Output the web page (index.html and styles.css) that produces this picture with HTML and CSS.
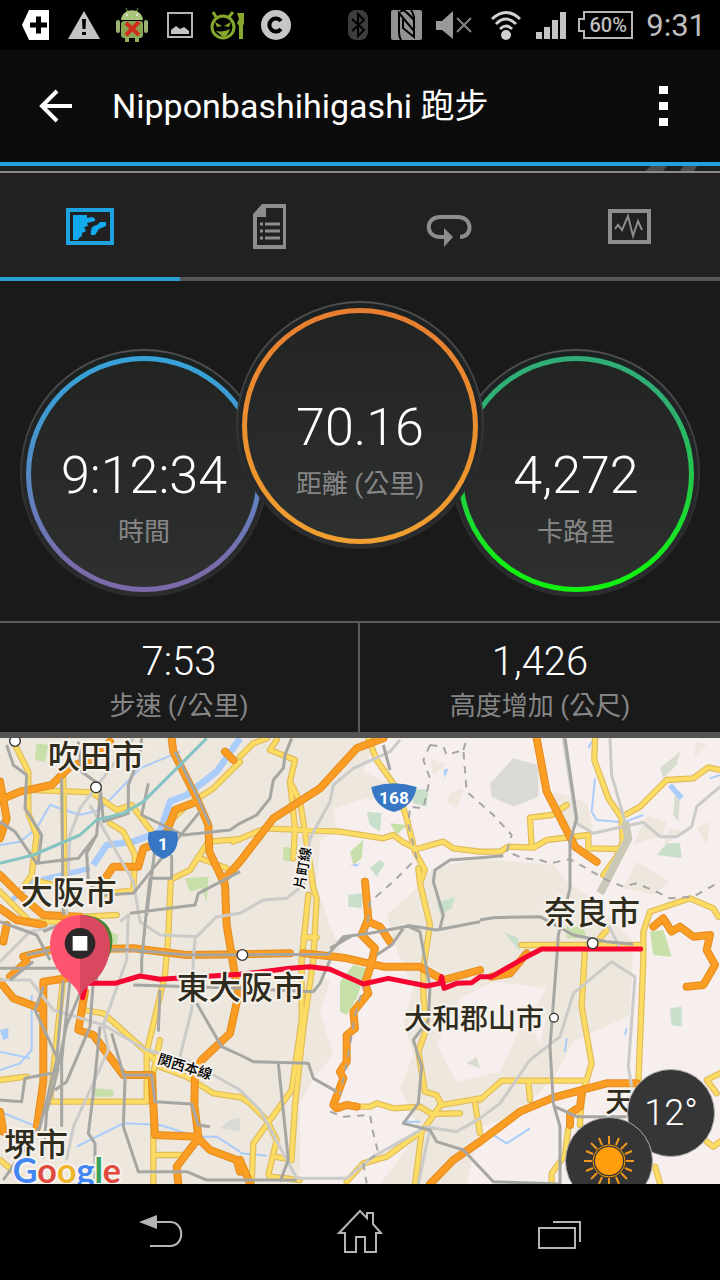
FILE: index.html
```html
<!DOCTYPE html>
<html lang="zh-Hant">
  <head>
    <meta charset="UTF-8" />
    <meta name="viewport" content="width=device-width, initial-scale=1.0" />
    <title>Nipponbashihigashi 跑步</title>
    <link rel="stylesheet" href="styles.css">
  </head>
  <body>
    <!-- Status bar -->
    <div class="status-bar">
      <div class="status-group">
        <svg width="36" height="36" viewBox="0 0 36 36"><path fill="#fff" d="M4 18 11 3h20v30H11z"/><path stroke="#000" stroke-width="5" d="M12 18h17M20.500 9.500v17"/></svg>
        <svg width="36" height="36" viewBox="0 0 36 36"><path fill="#c4c4c4" d="M18 4 34 32H2z"/><path fill="#000" d="M16 12h4l-.5 10h-3zM16 25h4v3h-4z"/></svg>
        <svg width="36" height="36" viewBox="0 0 36 36">
          <path stroke="#7d9a56" stroke-width="1" d="m12 1 2 4m10-4-2 4"/>
          <path fill="#a9c67c" d="M7 13C8 0 28 0 29 13z"/>
          <rect x="7" y="14" width="22" height="17" rx="3" fill="#8aa552"/>
          <rect x="2" y="13" width="4" height="13" rx="2" fill="#9bb474"/><rect x="30" y="13" width="4" height="13" rx="2" fill="#9bb474"/>
          <path fill="#8fae5c" d="M11 30h4v5h-4zM21 30h4v5h-4z"/>
          <circle cx="13" cy="8" r="1" fill="#f2f2f2"/><circle cx="23" cy="8" r="1" fill="#f2f2f2"/>
          <path stroke="#d02c1e" stroke-width="4" d="m12 16 13 12m0-13L12 28"/>
        </svg>
        <svg width="36" height="36" viewBox="0 0 36 36"><rect x="6" y="6" width="24" height="24" fill="none" stroke="#b5b5b5" stroke-width="2"/><path fill="#c4c4c4" d="M9 27v-4l5-4 4 3 4-2 5 4v3z"/></svg>
        <svg width="36" height="36" viewBox="0 0 36 36" fill="none" stroke="#86a82c" stroke-width="3">
          <circle cx="13" cy="20" r="11"/><path d="m3 5 3 5m17-5-4 5"/>
          <path fill="#86a82c" stroke="none" d="M5 15l7 4-5 1zM21 15l-7 4 5 1zM6 24c5 1 10 0 14-2-2 7-6 8-7 8zM27 6h7v10l-1 3v13h-4V19l-2-3 2-4z"/>
        </svg>
        <svg width="36" height="36" viewBox="0 0 36 36"><circle cx="18" cy="18" r="15" fill="#c6c6c6"/><path fill="none" stroke="#000" stroke-width="4" d="M23 14a6.500 6.500 0 1 0 0 8"/></svg>
      </div>
      <div class="status-group">
        <svg width="36" height="36" viewBox="0 0 36 36"><rect x="8" y="3" width="20" height="30" rx="8" fill="#3d3d3d"/><path fill="none" stroke="#000" stroke-width="2" d="m12 12 12 11-6 6V7l6 6-12 11"/></svg>
        <svg width="36" height="36" viewBox="0 0 36 36">
          <rect x="3" y="3" width="31" height="30" rx="2" fill="#929292"/>
          <path fill="none" stroke="#000" stroke-width="2" d="M13 33q-2-3-2-8V6l15 18V13q0-6-3-10"/>
          <path fill="none" stroke="#000" stroke-width="2" d="M12 5 15 3q4 2 11 10M15 12v9l11 9V13M26 30V9"/>
        </svg>
        <svg width="36" height="36" viewBox="0 0 36 36"><path fill="#999" d="M0 14h6l11-10v28L6 23H0z"/><path stroke="#858585" stroke-width="2" d="m21 11 14 14m0-14L21 25"/></svg>
        <svg width="40" height="36" viewBox="0 0 40 36"><circle cx="22" cy="28" r="5" fill="#d0d0d0"/><path fill="none" stroke="#d0d0d0" stroke-width="3" d="M8 12q14-13 28 0M12 17q10-10 20 0M16 22q6-6 12 0"/></svg>
        <svg width="30" height="36" viewBox="0 0 30 36" fill="#c4c4c4"><path d="M0 25h6v7H0zM8 20h6v12H8zM16 13h6v19h-6zM24 5h6v27h-6z"/></svg>
        <span class="battery">
          <svg width="56" height="36" viewBox="0 0 56 36"><path fill="none" stroke="#b8b8b8" stroke-width="2" d="M6 5h48v26H6v-7H1V12h5z"/></svg>
          <span class="battery-text">60%</span>
        </span>
        <span class="clock">9:31</span>
      </div>
    </div>

    <!-- App bar -->
    <header class="app-bar">
      <button type="button" class="icon-button" aria-label="Back">
        <svg width="34" height="34" viewBox="0 0 34 34"><path fill="none" stroke="#fff" stroke-width="4" d="M18 2 3 17l15 15M3 17h30"/></svg>
      </button>
      <h1>Nipponbashihigashi 跑步</h1>
      <button type="button" class="icon-button more" aria-label="More">
        <svg width="10" height="40" viewBox="0 0 10 40"><path fill="#fff" d="M0 0h9v8H0zM0 16h9v8H0zM0 32h9v8H0z"/></svg>
      </button>
    </header>
    <div class="strip">
      <svg width="52" height="5" viewBox="0 0 52 5"><path fill="#4a4d4e" d="M6 0h16l-4 5H0zM38 0h14l-3 5H35z"/></svg>
    </div>

    <!-- Tabs -->
    <nav class="tabs">
      <button type="button" class="tab active" aria-label="Map">
        <svg width="48" height="48" viewBox="0 0 48 48"><path fill="none" stroke="#1fa2e0" stroke-width="4" d="M2 9h44v33H2z"/><path fill="#13a9ef" d="M7 14h14v3l5-1q4 1 3 4l-8 2 1 3-4 1 2 4-4 2v3l-3 2-1 2H7zM25 34q-1-10 6-10l3-3h6v4l-7 3-4 6z"/></svg>
      </button>
      <button type="button" class="tab" aria-label="Details">
        <svg width="48" height="48" viewBox="0 0 48 48"><path fill="#8d8d8d" fill-rule="evenodd" d="M16 3h24v45H7V13zM20 7v9h-9v28h26V7z"/><path stroke="#8d8d8d" stroke-width="3" d="M14 23h3m2 0h15M14 30h3m2 0h15M14 37h3m2 0h15"/></svg>
      </button>
      <button type="button" class="tab" aria-label="Laps">
        <svg width="48" height="48" viewBox="0 0 48 48"><path fill="none" stroke="#8d8d8d" stroke-width="4" d="M19 36h-5C-1 36-1 16 14 16h18c15 0 15 20 2 20"/><path fill="#8d8d8d" d="m18 27 9 9-9 10z"/></svg>
      </button>
      <button type="button" class="tab" aria-label="Charts">
        <svg width="48" height="48" viewBox="0 0 48 48"><path fill="none" stroke="#8d8d8d" stroke-width="4" d="M4 10h39v31H4z"/><path fill="none" stroke="#8d8d8d" stroke-width="2" d="m9 28 3-4 4 5 6-14 5 20 5-15 4 9"/></svg>
      </button>
    </nav>

    <main>
      <!-- Main figures -->
      <section class="dials">
        <div class="dial side">
          <div class="ring time">
            <span class="dial-value">9:12:34</span>
            <span class="label">時間</span>
          </div>
        </div>
        <div class="dial center">
          <div class="ring distance">
            <span class="dial-value">70.16</span>
            <span class="label">距離 (公里)</span>
          </div>
        </div>
        <div class="dial side">
          <div class="ring calories">
            <span class="dial-value">4,272</span>
            <span class="label">卡路里</span>
          </div>
        </div>
      </section>

      <section class="stats">
        <div class="stat">
          <span class="stat-value">7:53</span>
          <span class="label">步速 (/公里)</span>
        </div>
        <div class="stat">
          <span class="stat-value">1,426</span>
          <span class="label">高度增加 (公尺)</span>
        </div>
      </section>

      <!-- Route map -->
      <section class="map">
        <svg class="map-canvas" viewBox="0 9 2160 1338" preserveAspectRatio="xMidYMid slice">
          <defs>
            <path id="yellow-roads" d="M40 20 85 110V235L110 300 95 420 60 470M100 165 275 172 350 225 395 210 455 290M330 265 370 290 405 360 400 465 300 480M190 130 195 540M720 80 640 160 555 215 500 270M512 440 505 600 495 720 440 950V1100M480 915 460 1015V1347M520 430 570 405 625 320 720 312M600 370 680 400M250 545 350 540M0 470 90 560 180 560M120 440 240 470
              M830 15 810 45 885 75 870 140 885 280 880 370M870 140 900 200 915 290 940 460 950 490 940 675 910 880 885 1110 875 1270M720 65 760 25 800 10M700 320 795 280 1020 290 1150 310 1180 300 1210 322 1250 342 1330 320 1360 340 1440 350H1500L1525 335 1600 338 1640 315 1765 300V340L1860 342
              M1105 10 1130 75 1190 160 1220 250 1245 350 1275 405 1260 445 1290 570 1270 700V780L1280 880 1255 950 1275 1070 1310 1080 1325 1110 1440 1090M1260 445 1255 400M925 480 905 675V855L875 1065 760 1225 755 1345M910 607H950M720 1085 750 1105 800 1155 830 1215 805 1320M825 1265 875 1275M810 1325 900 1335M1070 1115H1110L1130 1105 1180 1120 1260 1115 1295 1137 1380 1135M1325 1105 1270 1185 1160 1265 1090 1285 1040 1340M1265 1190 1245 1347M1425 1105 1440 1195
              M1785 10 1783 75 1825 190 1865 250 1868 320 1850 365 1810 420M1875 240 1920 215 2000 135 2080 130 2125 97 2160 105M1700 210 1655 240 1590 248 1595 335M1565 630H1920M1820 585 1800 610M1755 640 1745 815 1775 985 1745 1085 1740 1170M1915 1045 1930 675V590L1950 530 2070 490 2140 520 2155 545M1440 1095 1505 1037H1760M1585 1040 1590 1095M1705 1180 1695 1260 1655 1315V1347M2160 1015 2120 1035 2150 1075M2120 1220 2140 1235 2160 1220M1965 1295 1980 1345
              M0 1035 80 1025M160 1100H440M190 725 150 1100M250 825 310 835 350 870 455 965 480 995 560 1025 640 1075 720 1087M465 1260H545M0 1275 60 1325"/>
            <path id="orange-roads" d="M0 195 60 170 155 150 210 95 270 75 330 20M0 140 20 250 0 310M305 445 340 395H415L430 340 490 320 525 225 590 200M515 10 520 50 590 190 625 270 628 350 675 450 680 570 715 780 690 895 605 975 585 1010 583 1110 595 1205 465 1200 455 1020H370L280 900 235 885 255 770M675 50 700 75M0 420 60 480 130 540 240 545M70 665 150 645 400 640 560 660 870 655M675 430 720 380 820 250 960 160 1070 40 1150 10
              M910 655 1030 668 1150 695 1260 695 1330 735 1440 705M1475 725 1530 715 1580 655M1095 440 1105 550 1085 600 1125 640 1110 700 1095 745 1105 775 1060 830 1065 880 1040 900V980L1020 1010 1030 1030 1000 1110 1010 1120 1040 1110 1070 1115M1105 560 1140 575 1170 620M1610 10 1640 170 1725 335 1790 380M1960 575 1990 550 2015 590 2040 575 2080 605 2130 600 2120 645 2145 690 2110 750 2060 755M1290 1347 1360 1275 1440 1220 1560 1130 1660 1088 1820 1045H1910M1745 1080 1740 1115 1710 1135V1170
              M0 740 40 790 120 820M200 730 130 740V1040L110 1180M595 1210 530 1295 535 1347M595 1210 630 1245 710 1275 720 1310M30 725 80 680M0 1130 10 1190M720 1275 750 1345M0 520 50 555 130 570M10 620 20 570"/>
          </defs>

          <!-- Land, parks and water -->
          <path fill="#ede7dd" d="M0 0H2160V1350H0z"/>
          <path fill="#f6efed" d="M1130 9 1090 110 1180 150 1190 200 1100 190 1000 220 1010 280 960 320 950 450 985 560 1020 640 1000 675 930 800 960 1000 900 1100V1347H2160V9z"/>
          <g fill="#ede7dd">
            <path d="M1300 400 1440 370 1660 390 1700 440 1760 480 1900 620 1890 840 1720 920 1660 1030 1560 1130 1440 1180 1400 1347H1140L1260 1190 1200 1060 1240 960 1210 860 1240 760 1180 620 1160 540 1240 470z"/>
            <path d="M930 700 990 740 960 830 1000 960 930 1040zM1290 70 1340 90 1300 120zM1350 175 1390 160 1370 220 1340 200zM1660 170 1760 200 1780 280 1680 280zM1940 240 2000 260 1990 300 1900 330zM2080 70 2120 30 2090 20zM1990 330 2010 280 2060 290zM2090 280 2130 260 2120 330zM1720 1180 1900 1200 1880 1310 1760 1270zM1910 380 2010 440 1960 480 1870 460z"/>
          </g>
          <path fill="#f6efed" d="M1380 790 1480 740 1640 760 1560 880 1500 1010 1370 1040 1310 930zM1480 1230 1580 1190 1600 1290 1500 1310zM1590 870 1640 840 1620 930z"/>
          <g fill="#c7dfa8">
            <path d="M110 25 145 30 135 80 105 75zM555 430 625 425 620 500 605 460 570 470zM285 1060 340 1065V1085H285zM330 590 355 600 350 630 330 620zM1050 350 1090 315 1085 370 1060 390zM850 335 880 340 875 380 850 375zM1170 265 1220 270 1190 300zM1020 740 1060 690 1100 700 1070 790 1040 840 1020 830zM1950 590 1990 585 2015 665 1960 660zM1700 570 1750 580 1760 610 1700 610z"/>
            <path fill="#c8dfcc" d="M1230 160 1285 165 1280 215 1240 205zM1100 230 1145 235 1140 290 1110 270zM1110 400 1140 375 1155 385 1130 425zM1045 480 1090 475 1085 520 1045 515zM1310 505 1365 485 1355 520 1320 540zM1510 590 1555 610 1560 650zM1970 360 2000 325H2040L2045 370zM2010 820 2045 815V875L2015 870z"/>
            <path fill="#dadad6" d="M1470 145 1540 70 1615 90V185L1540 215 1475 185zM660 1180 690 1155 720 1150V1190z"/>
            <path fill="#d8ddd0" d="M1980 100 2040 50 2030 90 1990 130zM2025 170 2040 180 2035 260 2020 240zM1400 985 1430 965 1440 1000z"/>
          </g>
          <g class="water">
            <path stroke-width="20" d="M720 10 650 110 560 180 510 200 480 290 400 320 320 330 280 390"/>
            <path stroke-width="16" d="M270 400 100 440 30 500M2010 150 2045 190"/>
            <path stroke-width="6" d="M0 330 60 320 110 280 150 210 240 240 300 225 420 100 540 50M95 780V945L60 985 0 1005M0 950 90 970M0 1130 110 1175M230 1235 370 1165 480 1170 590 1205 650 1205 720 1250M1785 130 1775 230 1790 255 1870 262 1930 240M1765 40 1775 20M2130 130 2160 120M1700 910 1695 950M1875 900 1880 880M1480 1200 1520 1225 1590 1180M720 1255 800 1262M1210 1160 1260 1160"/>
            <path fill="#a9ccfb" d="M0 885 25 880V910L10 915zM1330 105 1345 100 1335 130zM1050 390 1080 385 1070 395z"/>
          </g>

          <!-- Roads -->
          <use href="#yellow-roads" class="road yellow-edge"/>
          <use href="#yellow-roads" class="road yellow-fill"/>
          <use href="#orange-roads" class="road orange-edge"/>
          <use href="#orange-roads" class="road orange-fill"/>

          <!-- Railways -->
          <path class="rail-light" d="M400 10 240 220 210 300 200 540M270 210 400 440 420 560 480 600 590 605 650 545 720 535 790 495 860 490 910 450 930 310 990 200 1000 150 1060 100 1170 50 1200 15M585 610 580 675 575 825 540 965M0 735 90 735 160 825 310 870 440 945 560 975 720 1065 780 1125 890 1330H1040L1120 1265 1280 1175 1370 1190 1440 1150 1500 1105 1590 975 1680 905 1720 775 1835 680 1905 725 1885 995 1895 1055M380 675 310 870 325 945 220 1175 200 1275M1690 10 1730 265 1780 295 1930 262 1980 305H2030L2075 275 2090 215 2160 155M1830 10 1835 120 1875 260M1825 570 1860 640M240 560 90 590 0 680M360 560 385 540 380 675M1290 1180 1255 1347"/>
          <path class="rail-wide" d="M1875 260 1885 310 1800 475"/>
          <path class="rail" d="M0 260 45 290 110 385 235 370 290 300 300 180M20 30 40 90 80 120 75 220 125 300 115 380M185 130 190 540M235 20 245 110 300 150 310 260 385 235V150L420 60 425 10M445 145 425 240 550 300 690 285 720 265 770 240 810 190 820 135 850 100 855 60 875 10M525 50 590 180 630 270M290 300 260 355 265 440 300 480 400 475 460 400 600 230M515 360V430H450L440 520 425 675V715M390 535 585 510 595 475 720 410M465 340 440 540M80 660 150 645 400 645 560 660 985 658 1030 605 1110 595 1230 572 1310 585 1440 560
            M990 640 1060 600M1150 30 1170 105M1440 368 1350 375 1305 405 1300 440 1330 540 1320 580M1220 572 1260 590 1275 675 1290 755 1285 855 1240 915 1265 995 1255 1105 1210 1165 1290 1185 1310 1220 1390 1245 1480 1340 1680 1347M1130 660 1175 630 1210 580M1695 10 1730 250 1710 320V460L1675 600 1670 675 1650 935 1660 1105 1680 1175V1347M1440 555 1480 548 1620 545 1720 600 1820 620 1900 628M1440 368 1510 362M1665 1115 1730 1145H1880
            M400 750 720 760 940 770 960 745 990 675M190 735 170 975 120 1175 10 1335M210 735 185 975V1175M175 1000 140 1130 130 1270M240 775 200 870 160 1060M280 735 270 875 200 1040 165 1065M300 875 280 1075 265 1195 285 1225V1347M335 895 375 1035 370 1175 415 1310H560L620 1335H890M370 1020H455L465 1100 575 1107 595 1170 630 1175M590 805 665 935 720 960 760 980 925 985 940 1030 1010 1070M835 985 865 1275 840 1340M480 765 475 890M0 1095 65 1100 75 1030 155 1015M130 755 105 825 170 965M0 700 200 700M30 735 100 680M290 690V740M0 560 110 600 150 675M130 590 200 560"/>
          <path class="rail-dashed" d="M1290 30 1270 75 1290 130 1270 220 1230 215 1225 270 1250 370 1180 440 1110 500 1100 590M1290 30 1330 35 1340 60 1390 45 1400 170 1480 240 1535 300 1520 350 1570 370 1620 375 1650 385 1710 372 1820 435 1870 455 1910 445 1980 475 2010 490 2080 485 2160 440M1390 45 1400 10M990 1130 1030 1145 1110 1140 1120 1195 1135 1255 1090 1285 1100 1345M1095 740 1065 840 1045 960 1020 1080"/>
          <path class="line-teal" d="M0 385 100 360 240 300 290 255 370 235 430 200 500 130 620 10"/>

          <!-- Recorded route -->
          <path class="route" d="M248 788 258 745 345 745 420 723 480 733 720 718 870 700 930 695 990 703 1090 747 1165 730 1280 753 1320 745 1325 725 1332 760 1370 745 1415 743 1440 725H1475L1580 665 1625 642H1922"/>

          <!-- Places -->
          <g class="place-dot">
            <circle cx="45" cy="18" r="16"/><circle cx="288" cy="157" r="16"/><circle cx="727" cy="660" r="16"/><circle cx="1778" cy="625" r="16"/><circle cx="1662" cy="848" r="13"/>
          </g>
          <g fill="#3877c4">
            <path d="M446 292q44-12 86 0 10 60-42 80-56-22-44-80z"/>
            <path d="M1114 156q68-22 136 0-10 60-68 75-60-15-68-75z"/>
          </g>
          <g class="shield-text">
            <text x="489" y="346">1</text>
            <text x="1182" y="206">168</text>
          </g>
          <g class="place">
            <text class="place-large" x="144" y="98">吹田市</text>
            <text class="place-large" x="62" y="508">大阪市</text>
            <text class="place-large" x="1632" y="566">奈良市</text>
            <text class="place-large" x="530" y="792">東大阪市</text>
            <text class="place-large" x="12" y="1262">堺市</text>
            <text class="place-small" x="1212" y="882">大和郡山市</text>
            <text class="place-small" x="1816" y="1131">天</text>
            <text class="line-name" transform="translate(912 464) rotate(-80)">片町線</text>
            <text class="line-name" transform="translate(470 985) rotate(17)">関西本線</text>
          </g>
          <text class="google" x="38" y="1344"><tspan fill="#4285f4">G</tspan><tspan fill="#e0493e">o</tspan><tspan fill="#f0b429">o</tspan><tspan fill="#4285f4">g</tspan><tspan fill="#34a25a">l</tspan><tspan fill="#e0493e">e</tspan></text>

          <!-- Start and finish pin -->
          <path fill="#47862f" d="M250 540c110 5 108 120 38 170z"/>
          <path fill="#ff5470" d="M240 540c-112 4-110 128-44 190 24 20 38 36 44 56z"/>
          <path fill="#d8485f" d="M240 540c110 4 110 128 52 190-22 20-46 36-52 56z"/>
          <circle cx="240" cy="625" r="46" fill="#2b2728"/>
          <path fill="#fff" d="M218 603h44v44h-44z"/>
        </svg>

        <div class="weather temperature">12°</div>
        <div class="weather sky">
          <svg width="52" height="52" viewBox="-26 -26 52 52">
            <circle r="14" fill="#ff9d0a"/><circle r="16" fill="none" stroke="#ff9d0a" stroke-width="1"/>
            <path stroke="#f0981b" stroke-width="2" d="M0-17V-25M0 17V25M-17 0H-25M17 0H25M12-12 18-18M-12-12-18-18M12 12 18 18M-12 12-18 18M7-16 10-23M-7-16-10-23M7 16 10 23M-7 16-10 23M16-7 23-10M16 7 23 10M-16-7-23-10M-16 7-23 10"/>
          </svg>
        </div>
      </section>
    </main>

    <!-- System navigation -->
    <nav class="nav-bar">
      <button type="button" class="icon-button" aria-label="Back">
        <svg width="48" height="48" viewBox="0 0 48 48"><path fill="#b5b5b5" d="M3 14 21 7v14z"/><path fill="none" stroke="#b5b5b5" stroke-width="2" d="M16 14h18c15 0 15 24 0 24H14"/></svg>
      </button>
      <button type="button" class="icon-button" aria-label="Home">
        <svg width="48" height="48" viewBox="0 0 48 48"><path fill="none" stroke="#b5b5b5" stroke-width="2" d="M8 25H3L24 3l7 7V5h6v11l8 9h-5v19H29V29h-9v15H9V24"/></svg>
      </button>
      <button type="button" class="icon-button" aria-label="Recent apps">
        <svg width="48" height="48" viewBox="0 0 48 48"><path fill="none" stroke="#b5b5b5" stroke-width="2" d="M3 20h36v20H3zM17 14h27v20"/></svg>
      </button>
    </nav>
  </body>
</html>
```
FILE: styles.css
```css
* {
  box-sizing: border-box;
}
body {
  display: flex;
  flex-direction: column;
  min-height: 100vh;
  margin: 0;
  background-color: #1a1a1a;
  color: #fff;
  font-family: Roboto, "Noto Sans CJK TC", sans-serif;
}
svg {
  display: block;
}
button {
  padding: 0;
  border: 0;
  background: none;
  color: inherit;
  cursor: pointer;
}

/* Status bar */
.status-bar {
  display: flex;
  justify-content: space-between;
  height: 50px;
  padding: 0 14px 0 18px;
  background-color: #000;
}
.status-group {
  display: flex;
  align-items: center;
  gap: 12px;
}
.battery {
  position: relative;
}
.battery-text {
  position: absolute;
  inset: 0 0 0 4px;
  color: #bdbdbd;
  font-size: 20px;
  font-weight: 500;
  line-height: 36px;
  text-align: center;
}
.clock {
  color: #bdbdbd;
  font-size: 31px;
}

/* App bar */
.app-bar {
  display: flex;
  align-items: center;
  height: 116px;
  padding: 0 51px 0 39px;
  border-bottom: 4px solid #23a2dd;
  background-color: #0c0c0c;
}
.app-bar h1 {
  flex: 1;
  margin: 0 0 0 39px;
  font-size: 34px;
  font-weight: 400;
  line-height: 40px;
}
.strip {
  display: flex;
  justify-content: flex-end;
  height: 7px;
  padding-right: 23px;
  border-bottom: 2px solid #8a8a8c;
  background-color: #1c2224;
}

/* Tabs */
.tabs {
  display: grid;
  grid-template-columns: repeat(4, 1fr);
  background-color: #212121;
}
.tab {
  display: flex;
  align-items: center;
  justify-content: center;
  height: 108px;
  border-bottom: 4px solid #565656;
}
.tab.active {
  border-bottom-color: #2a9fd6;
}

main {
  display: flex;
  flex: 1;
  flex-direction: column;
}

/* Dials */
.dials {
  display: flex;
  justify-content: center;
  padding: 20px 0 24px;
}
.dial {
  width: 248px;
  height: 248px;
  padding: 5px 4px 3px;
  border: 2px solid transparent;
  border-radius: 50%;
  background: linear-gradient(#1b2020, #2b2c2e) padding-box,
    linear-gradient(#505050, #2b2c2e 70%) border-box;
}
.dial.side {
  margin-top: 48px;
}
.dial.center {
  z-index: 1;
  margin: 0 -32px;
}
.ring {
  display: flex;
  flex-direction: column;
  align-items: center;
  height: 100%;
  padding-top: 83px;
  border: 5px solid transparent;
  border-radius: 50%;
}
.time {
  background: linear-gradient(#222422, #2e3030) padding-box,
    linear-gradient(#36a3d9, #3f9bd2 25%, #7c6bab 90%) border-box;
}
.distance {
  background: linear-gradient(#222422, #2e3030) padding-box,
    linear-gradient(#e67e30, #f0a030) border-box;
}
.calories {
  background: linear-gradient(#222422, #2e3030) padding-box,
    linear-gradient(#30ad78, #2fb070 25%, #12f012 90%) border-box;
}
.dial-value {
  font-size: 52px;
  font-weight: 300;
  line-height: 64px;
}
.label {
  color: #868686;
  font-size: 26px;
  font-weight: 400;
  line-height: 40px;
}
.dial .label {
  margin-top: 4px;
}

/* Pace and climb */
.stats {
  display: grid;
  grid-template-columns: 1fr 1fr;
  border-top: 2px solid #5a5a5a;
  border-bottom: 6px solid #545452;
}
.stat {
  display: flex;
  flex-direction: column;
  align-items: center;
  padding: 15px 0 6px;
}
.stat:first-child {
  border-right: 2px solid #5a5a5a;
}
.stat-value {
  font-size: 40px;
  font-weight: 300;
  line-height: 48px;
}

/* Map */
.map {
  position: relative;
  flex: 1;
  min-height: 320px;
  overflow: hidden;
}
.map-canvas {
  position: absolute;
  width: 100%;
  height: 100%;
}
.map-canvas path {
  stroke-linejoin: round;
}
.road {
  fill: none;
  stroke-linecap: round;
}
.yellow-edge {
  stroke: #e0bc5c;
  stroke-width: 19;
}
.yellow-fill {
  stroke: #fddc64;
  stroke-width: 12;
}
.orange-edge {
  stroke: #e58f22;
  stroke-width: 24;
}
.orange-fill {
  stroke: #fb9d22;
  stroke-width: 17;
}
.water {
  fill: none;
  stroke: #a9ccfb;
}
.water path[fill] {
  stroke: none;
}
.rail,
.rail-light,
.rail-wide,
.rail-dashed,
.line-teal,
.route {
  fill: none;
  stroke: #a6a6a3;
  stroke-width: 9;
}
.rail-light {
  stroke: #cbcbc9;
}
.rail-wide {
  stroke: #cbc8b8;
  stroke-width: 24;
}
.rail-dashed {
  stroke-width: 6;
  stroke-dasharray: 22 20;
}
.line-teal {
  stroke: #84c4c2;
}
.route {
  stroke: #f5052f;
  stroke-width: 15;
  stroke-linecap: round;
}
.place-dot {
  fill: #fff;
  stroke: #333;
  stroke-width: 4;
}
.place,
.google {
  paint-order: stroke;
  stroke: #f6f2ec;
  stroke-width: 12;
  stroke-linejoin: round;
}
.place {
  fill: #2f2b1d;
  font-family: "Noto Sans CJK JP", sans-serif;
  font-weight: 500;
}
.place-large {
  font-size: 96px;
}
.place-small {
  font-size: 84px;
}
.line-name {
  fill: #000;
  font-size: 42px;
}
.shield-text {
  fill: #fff;
  font-size: 52px;
  font-weight: 700;
  text-anchor: middle;
}
.google {
  font-family: Lato, sans-serif;
  font-size: 102px;
  font-weight: 700;
}

/* Weather bubbles */
.weather {
  position: absolute;
  display: flex;
  align-items: center;
  justify-content: center;
  width: 88px;
  height: 88px;
  border: 1px solid #aaa;
  border-radius: 50%;
  background-color: #363636;
}
.temperature {
  right: 5px;
  bottom: 27px;
  font-size: 36px;
  font-weight: 300;
}
.sky {
  right: 67px;
  bottom: -21px;
}

/* System navigation */
.nav-bar {
  display: flex;
  align-items: center;
  justify-content: center;
  gap: 152px;
  height: 96px;
  background-color: #000;
}
```
